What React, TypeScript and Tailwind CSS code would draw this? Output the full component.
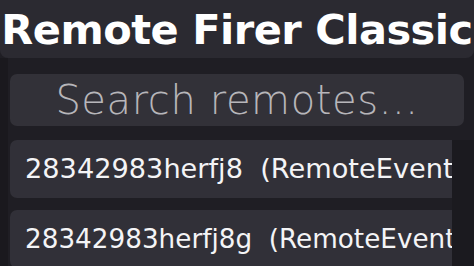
/**
 * Remote Firer Classic — header, search field and a list of remotes.
 */

const remotes = [
  { name: '28342983herfj8', kind: 'RemoteEvent', size: 'text-[27.2px]' },
  { name: '28342983herfj8g', kind: 'RemoteEvent', size: 'text-[26.25px]' },
];

export default function App() {
  return (
    <div className="flex h-[266px] w-[474px] flex-col overflow-hidden bg-[#1f1e24] font-['DejaVu_Sans',sans-serif]">
      {/* Header */}
      <div className="flex h-[58px] shrink-0 items-center justify-center rounded-b-[8px] bg-[#2b2a31] pt-[2px]">
        <h1 className="whitespace-nowrap text-[41.5px] font-bold leading-none tracking-[-0.5px] text-white">
          Remote Firer Classic
        </h1>
      </div>

      <div className="flex min-h-0 flex-1">
        {/* left edge */}
        <div className="w-[8px] shrink-0 bg-[#1a191e]" />

        <div className="flex min-w-0 flex-1 flex-col pt-[16px]">
          {/* Search */}
          <div className="mr-[10px] ml-[2px] flex h-[52px] shrink-0 items-center justify-center rounded-[7px] bg-[#323138]">
            <span className="whitespace-nowrap text-[40px] font-extralight leading-none tracking-[0.6px] text-[#b7b6ba]">
              Search remotes...
            </span>
          </div>

          {/* Remote list */}
          <div className="mt-[14px] flex min-h-0 flex-1">
            <div className="flex min-w-0 flex-1 flex-col gap-[12px] pl-[2px]">
              {remotes.map((r) => (
                <div
                  key={r.name}
                  className="flex h-[58px] shrink-0 items-center overflow-hidden rounded-l-[7px] bg-[#313038] pl-[15px]"
                >
                  <span className={`whitespace-nowrap ${r.size} leading-none text-[#f4f4f6]`}>
                    {r.name}&nbsp;&nbsp;({r.kind})
                  </span>
                </div>
              ))}
            </div>
            {/* scrollbar track */}
            <div className="w-[22px] shrink-0 bg-[#1b1a1f]" />
          </div>
        </div>
      </div>
    </div>
  );
}
